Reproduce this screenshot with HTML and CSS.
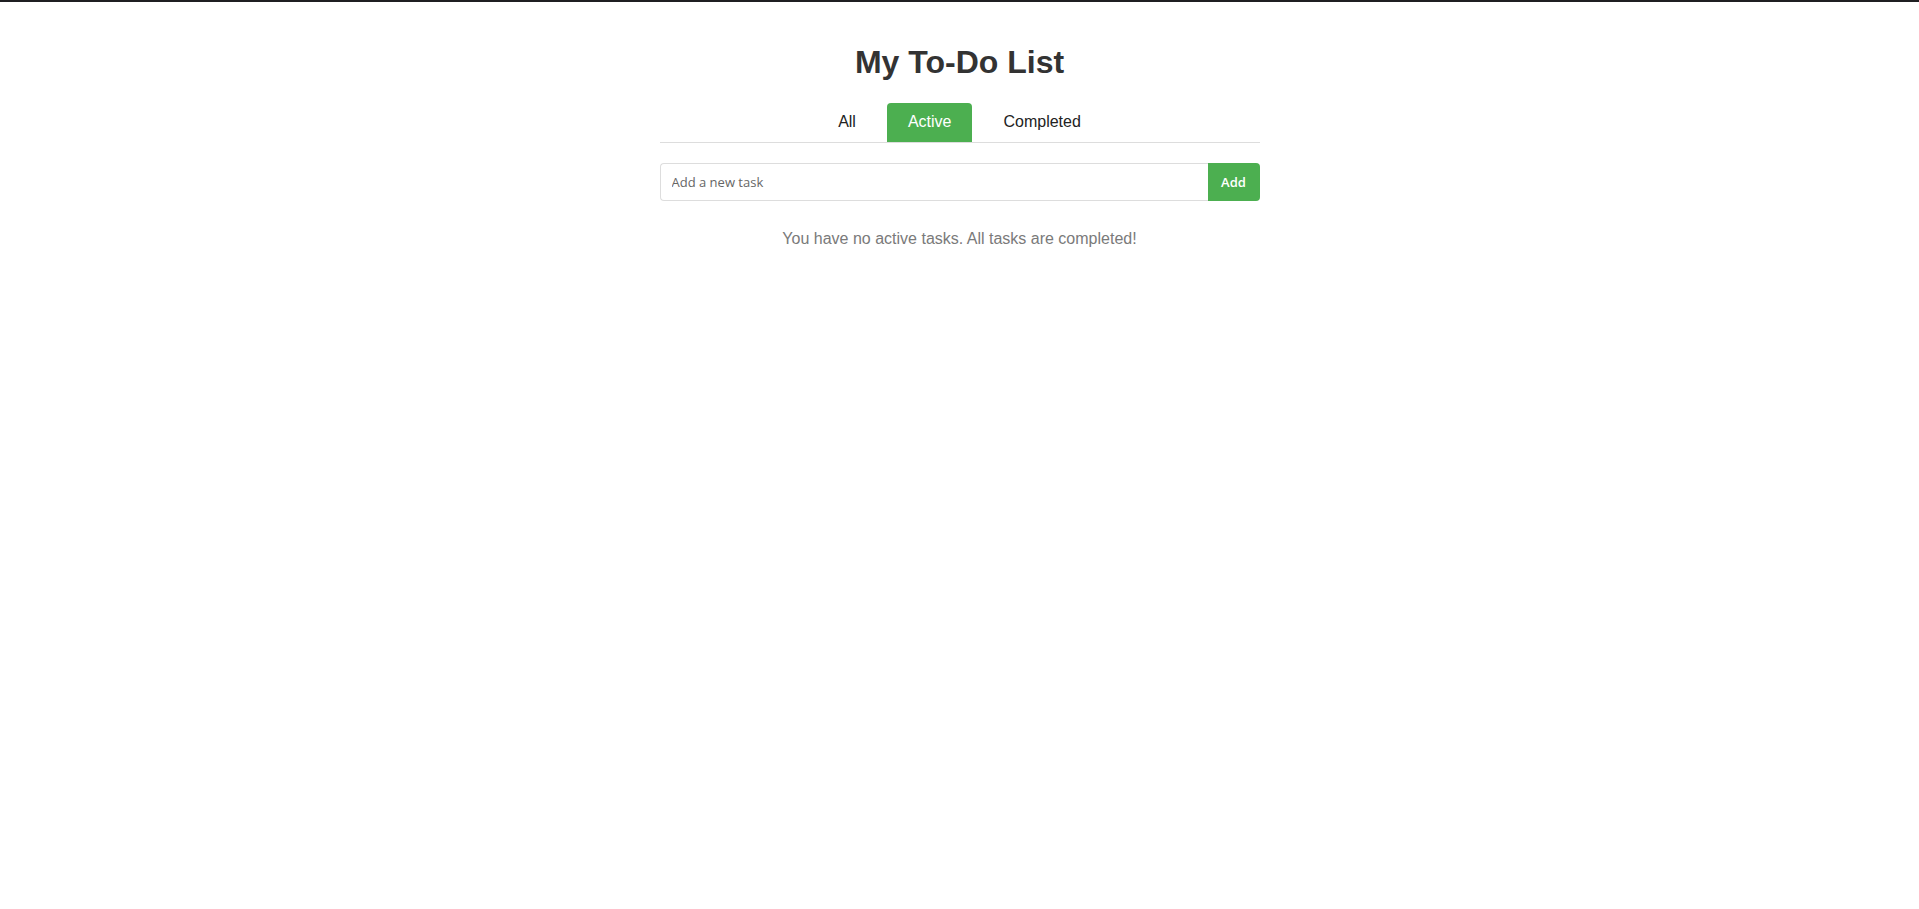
FILE: index.html
```html
<!DOCTYPE html>
<html lang="en">
<head>
<meta charset="utf-8">
<title>My To-Do List</title>
<link rel="stylesheet" href="styles.css">
</head>
<body>
<div class="topbar"></div>
<main class="container">
  <h1 class="title">My To-Do List</h1>
  <nav class="tabs">
    <button class="tab">All</button>
    <button class="tab tab-active">Active</button>
    <button class="tab">Completed</button>
  </nav>
  <form class="add-row" onsubmit="return false;">
    <input class="task-input" type="text" placeholder="Add a new task">
    <button class="add-btn" type="submit">Add</button>
  </form>
  <p class="empty">You have no active tasks. All tasks are completed!</p>
</main>
</body>
</html>
```
FILE: styles.css
```css
html, body {
  margin: 0;
  padding: 0;
  background: #ffffff;
  font-family: "Liberation Sans", Arial, sans-serif;
}
.topbar {
  height: 2px;
  background: #1f1f22;
}
.container {
  width: 600px;
  margin: 0 auto;
  padding-top: 42px;
}
.title {
  margin: 0 0 22px;
  font-size: 32px;
  line-height: 37px;
  font-weight: bold;
  color: #333333;
  text-align: center;
}
.tabs {
  display: flex;
  justify-content: center;
  gap: 10px;
  border-bottom: 1px solid #dddddd;
}
.tab {
  height: 39px;
  padding: 0 21px 2px;
  border: none;
  border-radius: 4px 4px 0 0;
  background: transparent;
  font-family: "Liberation Sans", Arial, sans-serif;
  font-size: 16px;
  color: #222222;
  cursor: pointer;
}
.tab-active {
  background: #4caf50;
  color: #ffffff;
}
.add-row {
  display: flex;
  margin: 20px 0 0;
  height: 38px;
}
.task-input {
  flex: 1;
  box-sizing: border-box;
  height: 38px;
  margin: 0;
  padding: 0 11px;
  border: 1px solid #dddddd;
  border-right: none;
  border-radius: 4px 0 0 4px;
  font-family: "Open Sans", "Noto Sans", sans-serif;
  font-size: 13px;
  color: #333333;
  outline: none;
}
.task-input::placeholder {
  color: #666666;
}
.add-btn {
  width: 52px;
  height: 38px;
  margin: 0;
  padding: 0;
  border: none;
  border-radius: 0 4px 4px 0;
  background: #4caf50;
  color: #ffffff;
  font-family: "Open Sans", "Noto Sans", sans-serif;
  font-size: 13px;
  font-weight: 600;
  cursor: pointer;
}
.empty {
  margin: 29px 0 0;
  font-size: 16px;
  line-height: 18px;
  color: #7a7a7a;
  text-align: center;
}
```
